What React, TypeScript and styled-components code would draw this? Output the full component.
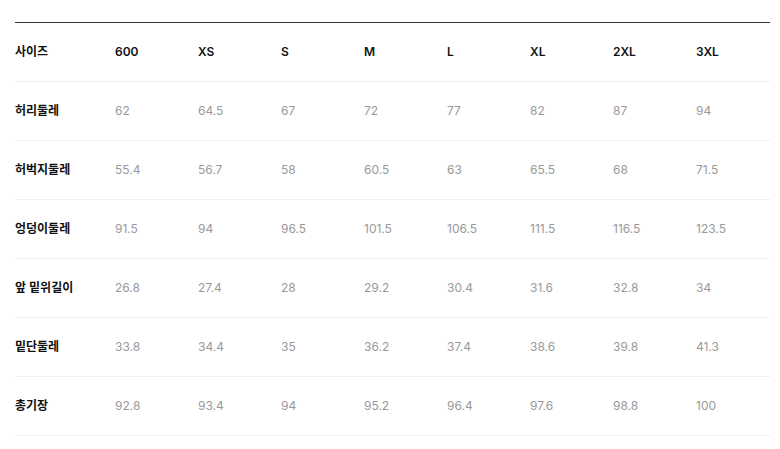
import React from "react";
import styled, { createGlobalStyle } from "styled-components";

const Global = createGlobalStyle`
  html, body { margin: 0; padding: 0; background: #fff; }
  body { font-family: Inter, "Noto Sans CJK KR", sans-serif; }
`;

const Page = styled.div`
  padding: 22px 10px 0 15px;
`;

const Table = styled.div`
  width: 755px;
  border-top: 1px solid #333;
`;

const Row = styled.div`
  display: grid;
  grid-template-columns: 100px repeat(7, 83px) 1fr;
  height: 58px;
  align-items: center;
  border-bottom: 1px solid #efefef;
`;

const Cell = styled.div<{ $head?: boolean }>`
  font-size: 12px;
  line-height: 16px;
  font-weight: ${(p) => (p.$head ? 600 : 400)};
  color: ${(p) => (p.$head ? "#111" : "#999")};
  white-space: nowrap;
`;

const sizes = ["600", "XS", "S", "M", "L", "XL", "2XL", "3XL"];
const rows: [string, string[]][] = [
  ["허리둘레", ["62", "64.5", "67", "72", "77", "82", "87", "94"]],
  ["허벅지둘레", ["55.4", "56.7", "58", "60.5", "63", "65.5", "68", "71.5"]],
  ["엉덩이둘레", ["91.5", "94", "96.5", "101.5", "106.5", "111.5", "116.5", "123.5"]],
  ["앞 밑위길이", ["26.8", "27.4", "28", "29.2", "30.4", "31.6", "32.8", "34"]],
  ["밑단둘레", ["33.8", "34.4", "35", "36.2", "37.4", "38.6", "39.8", "41.3"]],
  ["총기장", ["92.8", "93.4", "94", "95.2", "96.4", "97.6", "98.8", "100"]],
];

export default function App() {
  return (
    <Page>
      <Global />
      <Table>
        <Row>
          <Cell $head>사이즈</Cell>
          {sizes.map((s) => (
            <Cell $head key={s}>{s}</Cell>
          ))}
        </Row>
        {rows.map(([label, vals]) => (
          <Row key={label}>
            <Cell $head>{label}</Cell>
            {vals.map((v, i) => (
              <Cell key={i}>{v}</Cell>
            ))}
          </Row>
        ))}
      </Table>
    </Page>
  );
}
